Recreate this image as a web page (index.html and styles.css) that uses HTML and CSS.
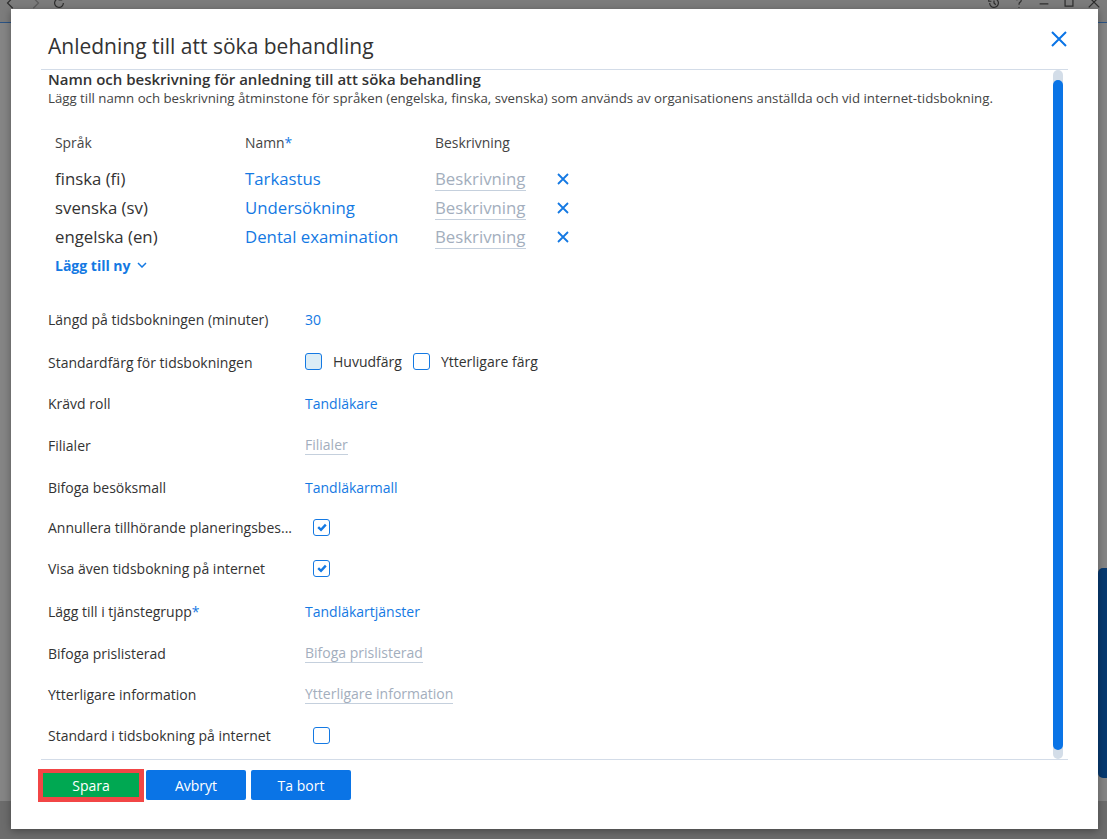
FILE: index.html
```html
<!DOCTYPE html>
<html lang="sv">
<head>
    <meta charset="UTF-8">
    <meta name="viewport" content="width=device-width, initial-scale=1.0">
    <title>Anledning till att söka behandling</title>
    <link rel="stylesheet" href="styles.css">
</head>
<body>
    <!-- app behind the dialog, dimmed -->
    <div class="app">
        <div class="app-bar">
            <div class="bar-group">
                <svg class="bar-icon" viewBox="0 0 16 16"><path d="M10 2 L4 8 L10 14" /></svg>
                <svg class="bar-icon faded" viewBox="0 0 16 16"><path d="M6 2 L12 8 L6 14" /></svg>
                <svg class="bar-icon" viewBox="0 0 16 16"><path d="M13 8 A5 5 0 1 1 11 4 M11 1 V4.5 H7.5" /></svg>
            </div>
            <div class="bar-group right">
                <svg class="bar-icon" viewBox="0 0 16 16"><path d="M3 8 A5 5 0 1 0 5 4 M8 5 V8 L10 10 M2 3 V6 H5" /></svg>
                <svg class="bar-icon" viewBox="0 0 16 16"><path d="M5.5 5 A2.5 2.5 0 1 1 9 7.3 C8 7.8 8 8.5 8 10 M8 12.5 V13.5" /></svg>
                <svg class="bar-icon" viewBox="0 0 16 16"><path d="M3 9 H13" /></svg>
                <svg class="bar-icon" viewBox="0 0 16 16"><path d="M3.5 2.5 H12.5 V11.5 H3.5 Z" /></svg>
                <svg class="bar-icon" viewBox="0 0 16 16"><path d="M2 1 L14 13 M14 1 L2 13" /></svg>
            </div>
        </div>
        <div class="app-main">
            <div class="app-scroll"></div>
        </div>
        <div class="app-footer">
            <span class="app-btn grey"></span>
            <span class="app-btn grey"></span>
            <span class="app-btn navy wide"></span>
            <span class="app-btn navy mid"></span>
            <span class="app-btn navy small"></span>
        </div>
    </div>

    <div class="modal">
        <div class="modal-header">
            <h1>Anledning till att söka behandling</h1>
            <button class="close">
                <svg viewBox="0 0 16 16"><path d="M1 1 L15 15 M15 1 L1 15" /></svg>
            </button>
        </div>

        <div class="modal-body">
            <div class="content">
                <h2>Namn och beskrivning för anledning till att söka behandling</h2>
                <p class="hint">Lägg till namn och beskrivning åtminstone för språken (engelska, finska, svenska) som används av organisationens anställda och vid internet-tidsbokning.</p>

                <div class="lang-table">
                    <div class="th">Språk</div>
                    <div class="th">Namn<span class="req">*</span></div>
                    <div class="th">Beskrivning</div>
                    <div></div>

                    <div class="lang">finska (fi)</div>
                    <div class="lang link">Tarkastus</div>
                    <div class="lang"><span class="placeholder">Beskrivning</span></div>
                    <div class="remove"><svg viewBox="0 0 12 12"><path d="M1 1 L11 11 M11 1 L1 11" /></svg></div>

                    <div class="lang">svenska (sv)</div>
                    <div class="lang link">Undersökning</div>
                    <div class="lang"><span class="placeholder">Beskrivning</span></div>
                    <div class="remove"><svg viewBox="0 0 12 12"><path d="M1 1 L11 11 M11 1 L1 11" /></svg></div>

                    <div class="lang">engelska (en)</div>
                    <div class="lang link">Dental examination</div>
                    <div class="lang"><span class="placeholder">Beskrivning</span></div>
                    <div class="remove"><svg viewBox="0 0 12 12"><path d="M1 1 L11 11 M11 1 L1 11" /></svg></div>
                </div>

                <div class="add-new">Lägg till ny <svg viewBox="0 0 10 6"><path d="M1 1 L5 5 L9 1" /></svg></div>

                <div class="form">
                    <div class="row">
                        <div class="label">Längd på tidsbokningen (minuter)</div>
                        <div class="value link">30</div>
                    </div>
                    <div class="row">
                        <div class="label low">Standardfärg för tidsbokningen</div>
                        <div class="value colors">
                            <span class="box tinted"></span><span class="opt">Huvudfärg</span>
                            <span class="box"></span><span class="opt">Ytterligare färg</span>
                        </div>
                    </div>
                    <div class="row">
                        <div class="label">Krävd roll</div>
                        <div class="value link">Tandläkare</div>
                    </div>
                    <div class="row">
                        <div class="label">Filialer</div>
                        <div class="value"><span class="placeholder">Filialer</span></div>
                    </div>
                    <div class="row">
                        <div class="label">Bifoga besöksmall</div>
                        <div class="value link">Tandläkarmall</div>
                    </div>
                    <div class="row tight">
                        <div class="label">Annullera tillhörande planeringsbes...</div>
                        <div class="value"><span class="box checked"><svg viewBox="0 0 12 12"><path d="M2.2 6.2 L5 8.8 L9.8 3.6" /></svg></span></div>
                    </div>
                    <div class="row loose">
                        <div class="label">Visa även tidsbokning på internet</div>
                        <div class="value"><span class="box checked"><svg viewBox="0 0 12 12"><path d="M2.2 6.2 L5 8.8 L9.8 3.6" /></svg></span></div>
                    </div>
                    <div class="row">
                        <div class="label">Lägg till i tjänstegrupp<span class="req">*</span></div>
                        <div class="value link">Tandläkartjänster</div>
                    </div>
                    <div class="row">
                        <div class="label">Bifoga prislisterad</div>
                        <div class="value"><span class="placeholder">Bifoga prislisterad</span></div>
                    </div>
                    <div class="row short">
                        <div class="label">Ytterligare information</div>
                        <div class="value"><span class="placeholder">Ytterligare information</span></div>
                    </div>
                    <div class="row">
                        <div class="label">Standard i tidsbokning på internet</div>
                        <div class="value"><span class="box check-only"></span></div>
                    </div>
                </div>
            </div>
            <div class="scrollbar"><div class="thumb"></div></div>
        </div>

        <div class="modal-footer">
            <button class="btn save">Spara</button>
            <button class="btn">Avbryt</button>
            <button class="btn">Ta bort</button>
        </div>
    </div>
</body>
</html>
```

FILE: styles.css
```css
body {
    margin: 0;
    height: 839px;
    overflow: hidden;
    background-color: #7c7c7c;
    font-family: "Open Sans", "Noto Sans", sans-serif;
    color: #333;
}

/* dimmed application underneath */
.app {
    display: flex;
    flex-direction: column;
    height: 100%;
}

.app-bar {
    height: 22px;
    display: flex;
    justify-content: space-between;
    border-bottom: 1px solid #2b5384;
}

.bar-group {
    display: flex;
    gap: 10px;
    padding-left: 4px;
}

.bar-group.right {
    gap: 11px;
    padding: 0 6px 0 0;
}

.bar-icon {
    width: 14px;
    height: 14px;
    margin-top: -4px;
    fill: none;
    stroke: #2e2e2e;
    stroke-width: 1.4;
}

.bar-icon.faded {
    stroke: #5c5c5c;
}

.app-main {
    flex: 1;
    display: flex;
    justify-content: flex-end;
    background-color: #858585;
}

.app-scroll {
    width: 9px;
    height: 210px;
    margin-top: 545px;
    background-color: #073a70;
    border-radius: 5px 0 0 5px;
}

.app-footer {
    height: 38px;
    display: flex;
    gap: 5px;
    padding-left: 21px;
    background-color: #6c6c6c;
}

.app-btn {
    height: 4px;
    border-radius: 0 0 3px 3px;
}

.app-btn.grey {
    width: 128px;
    background-color: #5e5e5e;
}

.app-btn.navy {
    background-color: #072a55;
}

.app-btn.wide {
    width: 296px;
}

.app-btn.mid {
    width: 258px;
    margin-left: 1px;
}

.app-btn.small {
    width: 30px;
    margin-left: 1px;
}

/* dialog */
.modal {
    position: absolute;
    left: 11px;
    top: 9px;
    width: 1087px;
    height: 820px;
    background-color: #fff;
    box-shadow: 0 2px 8px rgba(0, 0, 0, 0.35);
    display: flex;
    flex-direction: column;
}

.modal-header {
    height: 60px;
    margin: 0 30px;
    padding-left: 7px;
    display: flex;
    justify-content: space-between;
    border-bottom: 1px solid #d3dce8;
}

.modal-header h1 {
    margin: 24px 0 0;
    font-size: 21px;
    font-weight: 400;
    line-height: 26px;
    color: #333;
}

.close {
    width: 17px;
    height: 17px;
    margin-top: 21px;
    padding: 0;
    border: none;
    background: none;
}

.close svg {
    display: block;
    width: 16px;
    height: 16px;
    fill: none;
    stroke: #0a74e6;
    stroke-width: 2;
}

.modal-body {
    flex: 1;
    margin: 0 30px;
    display: flex;
    overflow: hidden;
}

.content {
    flex: 1;
    padding-left: 7px;
}

.content h2 {
    margin: 0;
    font-size: 15px;
    font-weight: 600;
    line-height: 19px;
}

.hint {
    margin: 0;
    font-size: 13.25px;
    line-height: 18px;
    color: #444;
}

.lang-table {
    margin-top: 14px;
    padding-left: 7px;
    display: grid;
    grid-template-columns: 190px 190px 122px 20px;
    grid-template-rows: 43px repeat(3, 29px);
    align-items: center;
}

.th {
    font-size: 13.9px;
    color: #444;
}

.lang {
    font-size: 16.8px;
    color: #333;
}

.link {
    color: #1479e3;
}

.req {
    color: #1479e3;
}

.placeholder {
    color: #a3aebd;
    border-bottom: 1px solid #c5d0dd;
}

.remove svg {
    display: block;
    width: 12px;
    height: 12px;
    fill: none;
    stroke: #1479e3;
    stroke-width: 1.8;
}

.add-new {
    margin-top: 4px;
    padding-left: 7px;
    height: 20px;
    display: flex;
    align-items: center;
    gap: 6px;
    font-size: 14px;
    font-weight: 700;
    color: #1479e3;
}

.add-new svg {
    width: 10px;
    height: 6px;
    fill: none;
    stroke: #1479e3;
    stroke-width: 1.5;
}

.form {
    margin-top: 23px;
}

.row {
    height: 42px;
    display: flex;
    align-items: center;
    font-size: 14px;
}

.row.tight {
    height: 38px;
}

.row.loose {
    height: 44px;
}

.row.short {
    height: 40px;
}

.label {
    width: 257px;
    color: #333;
}

.label.low {
    padding-top: 3px;
}

.value {
    display: flex;
    align-items: center;
}

.colors {
    gap: 11px;
}

.box {
    width: 17px;
    height: 17px;
    box-sizing: border-box;
    border: 1.75px solid #1479e3;
    border-radius: 3px;
    background-color: #fff;
    display: flex;
    align-items: center;
    justify-content: center;
}

.box.tinted {
    background-color: #dcedf6;
}

.box.checked,
.box.check-only {
    margin-left: 8px;
}

.box svg {
    width: 12px;
    height: 12px;
    fill: none;
    stroke: #1479e3;
    stroke-width: 2.4;
}

/* custom scroll bar */
.scrollbar {
    width: 10px;
    margin-right: 5px;
    padding: 10px 0 9px;
    background-color: #d3dde8;
    border-radius: 5px;
    box-sizing: border-box;
    display: flex;
}

.thumb {
    flex: 1;
    background-color: #0a74e6;
    border-radius: 5px;
}

.modal-footer {
    height: 70px;
    margin: 0 30px;
    padding-top: 9px;
    box-sizing: border-box;
    border-top: 1px solid #d3dce8;
    display: flex;
    align-items: flex-start;
    gap: 5px;
}

.btn {
    width: 100px;
    height: 30px;
    margin-top: 1px;
    padding: 0;
    border: none;
    border-radius: 2px;
    background-color: #0a74e6;
    color: #fff;
    font-family: inherit;
    font-size: 14px;
}

.btn.save {
    width: 106px;
    height: 33px;
    margin: 0 -3px;
    border: 5px solid #f24646;
    border-top-width: 4px;
    border-radius: 0;
    background-color: #00a852;
}
```
